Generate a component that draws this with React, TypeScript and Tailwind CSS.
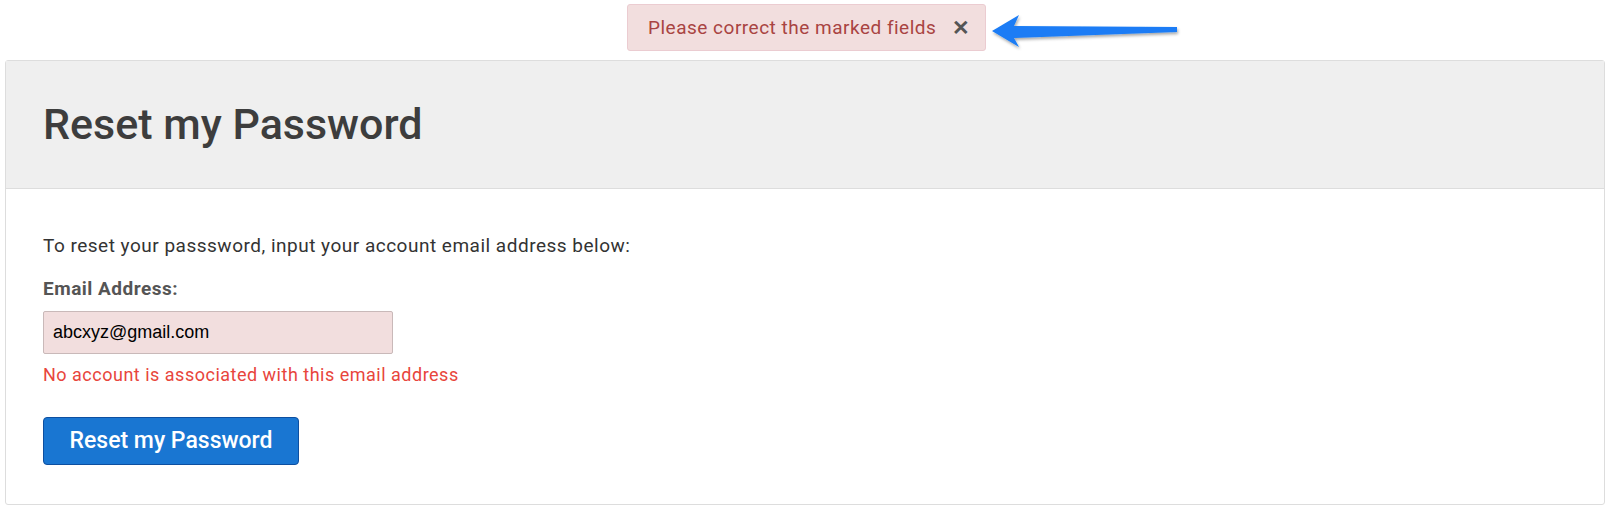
export default function App() {
  return (
    <div className="min-h-screen bg-white font-['Roboto','Liberation_Sans',sans-serif]">
      <div className="flex justify-center pt-[4px]">
        <div className="relative flex h-[47px] w-[359px] items-center rounded-[3px] border border-[#ebccd1] bg-[#f2dede] pl-[20px] pt-[2px] text-[19px] tracking-[0.5px] text-[#a94442]">
          <span>Please correct the marked fields</span>
          <span className="ml-[16px] text-[21px] font-bold leading-none text-[#555]">✕</span>
          <svg
            className="absolute left-[360px] top-[-4px]"
            width="200"
            height="52"
            viewBox="0 0 200 52"
          >
            <defs>
              <filter id="sh" x="-10%" y="-30%" width="120%" height="160%">
                <feDropShadow dx="1" dy="2" stdDeviation="1.5" floodColor="#000" floodOpacity="0.35" />
              </filter>
            </defs>
            <path
              d="M4 30 L31 14 L26 25 L189 26 L189 31 L26 37 L31 46 Z"
              fill="#1a7cf5"
              filter="url(#sh)"
            />
          </svg>
        </div>
      </div>

      <div className="ml-[5px] mr-[8px] mt-[9px] rounded-[3px] border border-[#dddddd]">
        <div className="flex h-[128px] items-center border-b border-[#dddddd] bg-[#efefef] px-[37px]">
          <h1 className="text-[43px] font-medium text-[#3d3d3d]">Reset my Password</h1>
        </div>
        <div className="px-[37px] pb-[39px] pt-[45px]">
          <p className="text-[19px] leading-[24px] tracking-[0.5px] text-[#333]">
            To reset your passsword, input your account email address below:
          </p>
          <label className="mt-[19px] block text-[19px] font-bold leading-[24px] tracking-[0.5px] text-[#555]">
            Email Address:
          </label>
          <input
            readOnly
            value="abcxyz@gmail.com"
            className="mt-[10px] block h-[43px] w-[350px] rounded-[2px] border border-[#c9b9b9] bg-[#f2dede] px-[9px] font-['Liberation_Sans',Arial,sans-serif] text-[18px] text-black outline-none"
          />
          <p className="mt-[9px] text-[18px] leading-[24px] tracking-[0.5px] text-[#e8453c]">
            No account is associated with this email address
          </p>
          <button className="mt-[30px] h-[48px] w-[256px] rounded-[4px] border border-[#0d4fa0] bg-[#1976d2] text-[23px] font-medium text-white">
            Reset my Password
          </button>
        </div>
      </div>
    </div>
  );
}
